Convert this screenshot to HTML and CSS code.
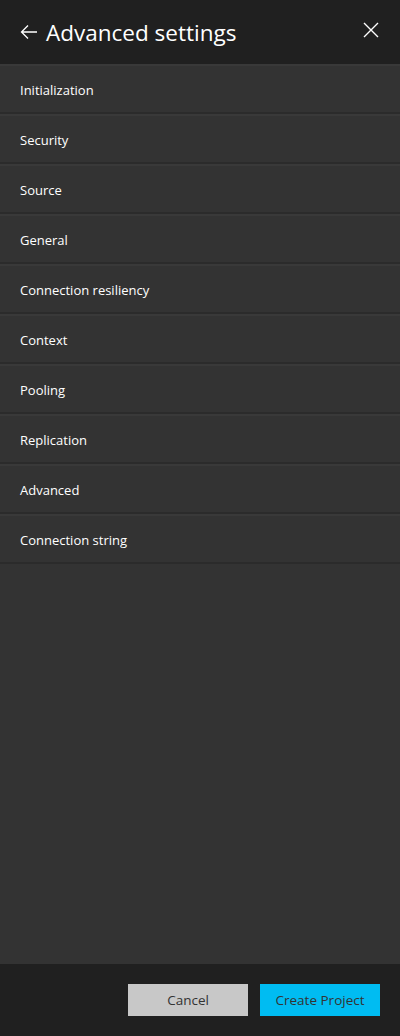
FILE: index.html
```html
<!DOCTYPE html>
<html>
<head>
<meta charset="utf-8">
<link rel="stylesheet" href="styles.css">
</head>
<body>
<div class="panel">
  <header class="header">
    <svg class="back" width="18" height="16" viewBox="0 0 18 16"><path d="M17 8H2M8 1.5L1.5 8L8 14.5" fill="none" stroke="#fff" stroke-width="1.3"/></svg>
    <h1 class="title">Advanced settings</h1>
    <svg class="close" width="16" height="16" viewBox="0 0 16 16"><path d="M1 1L15 15M15 1L1 15" fill="none" stroke="#fff" stroke-width="1.4"/></svg>
  </header>
  <main class="list">
    <div class="row">Initialization</div>
    <div class="row">Security</div>
    <div class="row">Source</div>
    <div class="row">General</div>
    <div class="row">Connection resiliency</div>
    <div class="row">Context</div>
    <div class="row">Pooling</div>
    <div class="row">Replication</div>
    <div class="row">Advanced</div>
    <div class="row">Connection string</div>
  </main>
  <footer class="footer">
    <button class="btn cancel">Cancel</button>
    <button class="btn create">Create Project</button>
  </footer>
</div>
</body>
</html>
```
FILE: styles.css
```css
* { box-sizing: border-box; }
html, body { margin: 0; padding: 0; }
body {
  width: 400px;
  height: 1036px;
  background: #333333;
  font-family: "Open Sans", "Noto Sans", sans-serif;
  color: #ffffff;
}
.panel {
  display: flex;
  flex-direction: column;
  height: 1036px;
}
.header {
  height: 64px;
  background: #202020;
  display: flex;
  align-items: center;
  padding: 0 21px 0 20px;
  flex-shrink: 0;
}
.back { margin-right: 8px; margin-top: -1px; }
.title {
  flex: 1;
  margin: 0;
  font-weight: 400;
  font-size: 22.5px;
  letter-spacing: 0;
  color: #ffffff;
  line-height: 1;
  margin-top: 2px;
}
.close { margin-top: -4px; }
.list {
  flex: 1;
  display: flex;
  flex-direction: column;
}
.row {
  height: 50px;
  display: flex;
  align-items: center;
  padding-left: 20px;
  padding-top: 2px;
  font-size: 13px;
  color: #ffffff;
  background: #333333;
  border-top: 2px solid #393939;
  border-bottom: 2px solid #2b2b2b;
}
.footer {
  height: 72px;
  background: #202020;
  display: flex;
  justify-content: flex-end;
  align-items: center;
  gap: 12px;
  padding: 0 20px;
  flex-shrink: 0;
}
.btn {
  width: 120px;
  height: 32px;
  border: none;
  font-family: "Open Sans", "Noto Sans", sans-serif;
  font-size: 13.5px;
  color: #333333;
  padding: 0;
}
.cancel { background: #c8c8c8; }
.create { background: #00bcf2; }
```
